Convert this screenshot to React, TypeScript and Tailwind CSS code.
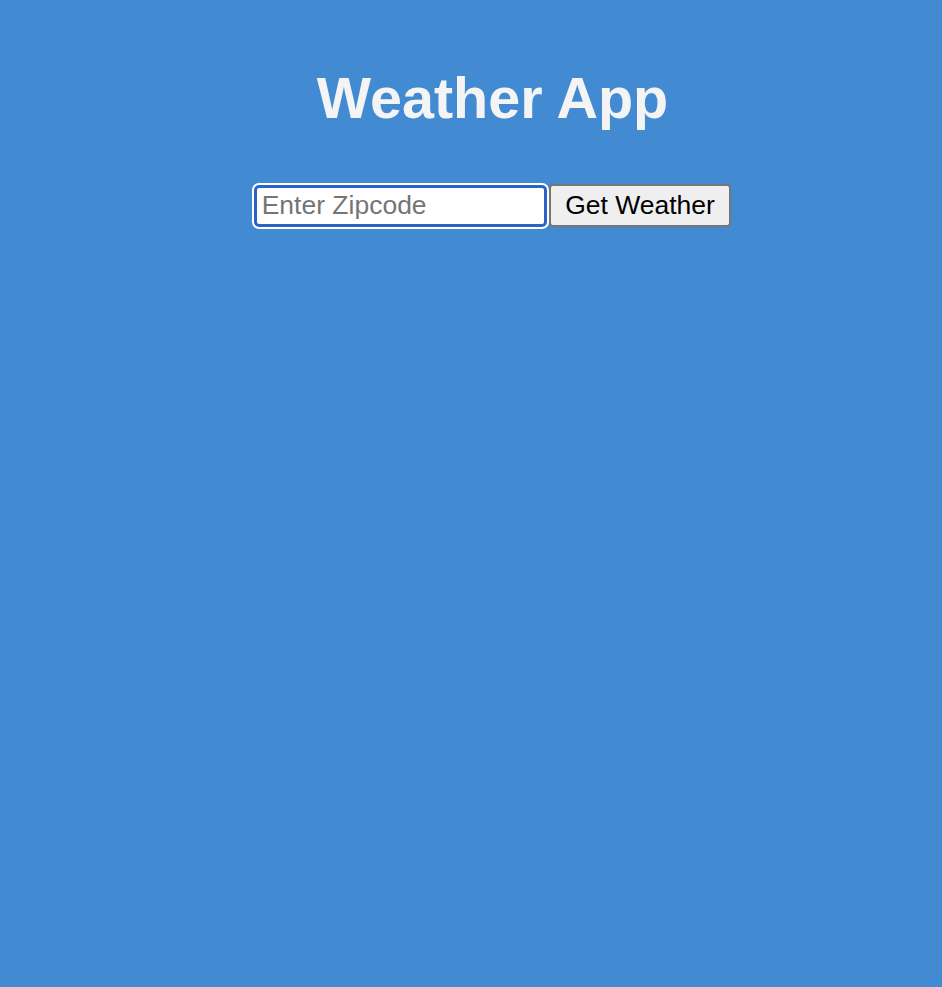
import { useState } from "react";

const App = () => {
  const [zip, setZip] = useState("");

  return (
    <div className="min-h-screen w-full bg-[#428bd3] font-['Liberation_Sans',Arial,sans-serif]">
      <div className="flex flex-col items-center pl-[43px]">
        <h1 className="mt-[65px] text-[57.5px] font-bold leading-[66px] text-[#f4f4f4]">
          Weather App
        </h1>
        <div className="mt-[53px] flex items-center gap-[2px]">
          <input
            autoFocus
            type="text"
            value={zip}
            onChange={(e) => setZip(e.target.value)}
            placeholder="Enter Zipcode"
            className="h-[42px] w-[293px] rounded-[5px] border-[3px] border-[#2b63cb] bg-white px-[5px] text-[26.5px] text-black caret-black outline-2 outline-white placeholder:text-[#757575] focus:outline-2 focus:outline-white"
          />
          <button className="h-[43px] rounded-[4px] border-2 border-[#767676] bg-[#efefef] px-[14.5px] text-[26.5px] leading-none text-black">
            Get Weather
          </button>
        </div>
      </div>
    </div>
  );
};

export default App;
